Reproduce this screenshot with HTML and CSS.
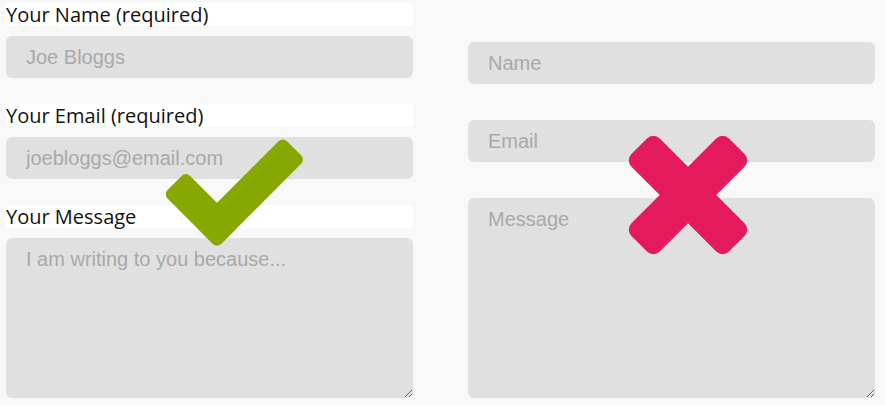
FILE: index.html
```html
<!DOCTYPE html>
<html lang="en">
<head>
<meta charset="utf-8">
<title>Contact form comparison</title>
<link rel="stylesheet" href="styles.css">
</head>
<body>
<main class="page">
  <form class="form form-good">
    <label class="field-label" for="n1">Your Name (required)</label>
    <input class="field" id="n1" type="text" placeholder="Joe Bloggs">
    <label class="field-label" for="e1">Your Email (required)</label>
    <input class="field" id="e1" type="email" placeholder="joebloggs@email.com">
    <label class="field-label" for="m1">Your Message</label>
    <textarea class="field area area-left" id="m1" placeholder="I am writing to you because..."></textarea>
  </form>
  <form class="form form-bad">
    <input class="field" type="text" placeholder="Name">
    <input class="field" type="email" placeholder="Email">
    <textarea class="field area area-right" placeholder="Message"></textarea>
  </form>
  <svg class="marks" width="885" height="405" viewBox="0 0 885 405" aria-hidden="true">
    <g class="tick" transform="translate(217 248) rotate(45)">
      <rect x="-32" y="-125" width="32" height="125" rx="6"/>
      <rect x="-76" y="-32" width="76" height="32" rx="6"/>
    </g>
    <g class="cross" transform="translate(688 195)">
      <rect x="-69" y="-20" width="138" height="40" rx="9" transform="rotate(45)"/>
      <rect x="-69" y="-20" width="138" height="40" rx="9" transform="rotate(-45)"/>
    </g>
  </svg>
</main>
</body>
</html>
```
FILE: styles.css
```css
html, body {
  margin: 0;
  padding: 0;
  background: #f8f8f8;
}

.page {
  position: relative;
  display: flex;
  gap: 55px;
  padding: 3px 10px 0 6px;
  width: 885px;
  height: 405px;
  box-sizing: border-box;
  overflow: hidden;
}

.form {
  width: 407px;
  display: flex;
  flex-direction: column;
  margin: 0;
}

.form-bad {
  padding-top: 39px;
  gap: 36px;
}

.field-label {
  display: block;
  background: #fff;
  border-radius: 4px;
  height: 23px;
  line-height: 23px;
  font-family: "Open Sans", "Liberation Sans", sans-serif;
  font-size: 20px;
  color: #111;
  margin-bottom: 10px;
}

.field {
  display: block;
  width: 100%;
  height: 42px;
  box-sizing: border-box;
  border: none;
  border-radius: 6px;
  background: #e0e0e0;
  padding: 0 20px;
  margin: 0;
  font-family: "Liberation Sans", Arial, sans-serif;
  font-size: 20px;
  color: #444;
  outline: none;
}

.form-good .field {
  margin-bottom: 26px;
}

.field::placeholder {
  color: #a9a9a9;
  opacity: 1;
}

.area {
  padding-top: 10px;
  line-height: 23px;
  resize: both;
}

.form-good .area-left {
  height: 160px;
  margin-bottom: 0;
}

.area-right {
  height: 200px;
}

.marks {
  position: absolute;
  left: 0;
  top: 0;
  pointer-events: none;
}

.tick rect {
  fill: #87a800;
}

.cross rect {
  fill: #e31b5d;
}
```
